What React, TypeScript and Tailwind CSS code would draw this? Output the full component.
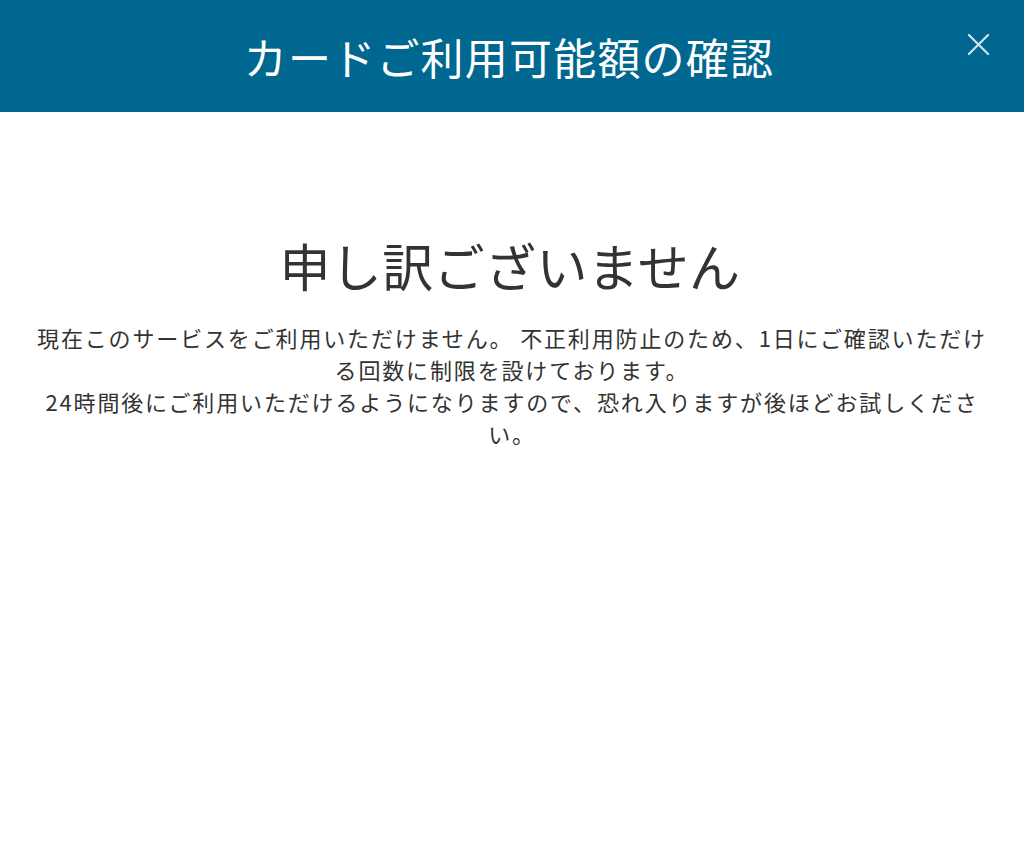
import React from "react";

export default function App() {
  return (
    <div
      className="w-[1024px] h-[846px] bg-white flex flex-col"
      style={{ fontFamily: '"Noto Sans CJK JP", "Noto Sans", sans-serif' }}
    >
      <header className="relative h-[112px] bg-[#006890] flex items-center justify-center shrink-0">
        <h1 className="text-white text-[43px] leading-none tracking-[1.2px] mr-[6px]">カードご利用可能額の確認</h1>
        <button className="absolute right-[34px] top-[33px] w-[23px] h-[23px] flex items-center justify-center">
          <svg width="23" height="23" viewBox="0 0 24 24">
            <path d="M2 2 L22 22 M22 2 L2 22" stroke="#cfe3ec" strokeWidth="2.3" strokeLinecap="round" />
          </svg>
        </button>
      </header>
      <main className="flex flex-col items-center px-[30px] pt-[121px]">
        <h2 className="text-[#333333] text-[51px] leading-[64px] tracking-[0.4px] mr-[4px]">申し訳ございません</h2>
        <p className="mt-[24px] text-[#333333] text-[22px] leading-[32px] tracking-[1.85px] text-center">
          現在このサービスをご利用いただけません。 不正利用防止のため、1日にご確認いただける回数に制限を設けております。
          <br />
          24時間後にご利用いただけるようになりますので、恐れ入りますが後ほどお試しください。
        </p>
      </main>
    </div>
  );
}
